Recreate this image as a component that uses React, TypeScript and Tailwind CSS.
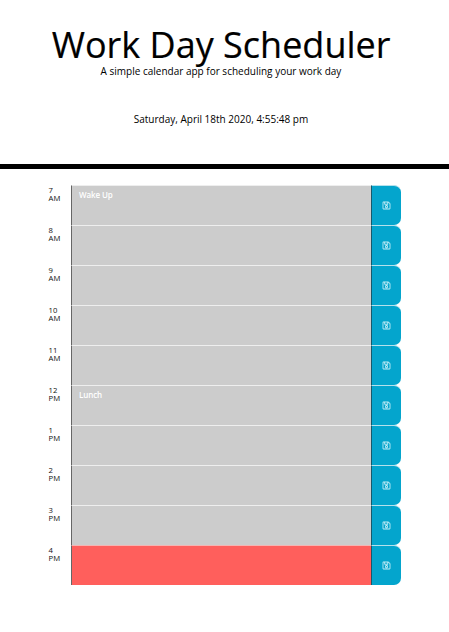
import { FaRegSave } from "react-icons/fa";

type Slot = { hour: string; period: string; task?: string; current?: boolean };

const slots: Slot[] = [
  { hour: "7", period: "AM", task: "Wake Up" },
  { hour: "8", period: "AM" },
  { hour: "9", period: "AM" },
  { hour: "10", period: "AM" },
  { hour: "11", period: "AM" },
  { hour: "12", period: "PM", task: "Lunch" },
  { hour: "1", period: "PM" },
  { hour: "2", period: "PM" },
  { hour: "3", period: "PM" },
  { hour: "4", period: "PM", current: true },
];

function TimeBlock({ hour, period, task, current }: Slot) {
  return (
    <div className="flex h-10">
      <div className="w-[23px] origin-left scale-x-[.96] pt-px pl-[0.6px] text-[8px] leading-[8px] text-[#111]">
        <div>{hour}</div>
        <div>{period}</div>
      </div>
      <div
        className={`w-[300px] border-l border-t border-l-[#666] pl-[7px] pt-[3px] text-[8px] leading-[12px] font-semibold tracking-[-0.1px] text-white ${
          current ? "border-t-[#f5b5b3] bg-[#ff5f5c]" : "border-t-[#eeeeee] bg-[#cccccc]"
        }`}
      >
        {task}
      </div>
      <button
        aria-label="Save"
        className="flex w-[30px] items-center justify-center rounded-r-[7px] border-l border-t border-l-[#17596b] border-t-[#b5e1ec] bg-[#04a5cd] pr-px pb-px text-[#c4edf6]"
      >
        <FaRegSave size={9} />
      </button>
    </div>
  );
}

export default function App() {
  return (
    <div className="h-[632px] w-[449px] overflow-hidden bg-white font-['Open_Sans',sans-serif] text-black">
      <header className="flex h-[169px] flex-col items-center border-b-[5px] border-black pr-[7px] pt-[22px]">
        <h1 className="scale-x-[.973] text-[37px] leading-[43px] whitespace-nowrap [-webkit-text-stroke:0.2px_black]">Work Day Scheduler</h1>
        <p className="text-[10px] leading-[12px]">A simple calendar app for scheduling your work day</p>
        <p className="mt-9 text-[10px] leading-[12px]">Saturday, April 18th 2020, 4:55:48 pm</p>
      </header>
      <main className="ml-[48px] pt-4">
        {slots.map((slot) => (
          <TimeBlock key={slot.hour} {...slot} />
        ))}
      </main>
    </div>
  );
}
